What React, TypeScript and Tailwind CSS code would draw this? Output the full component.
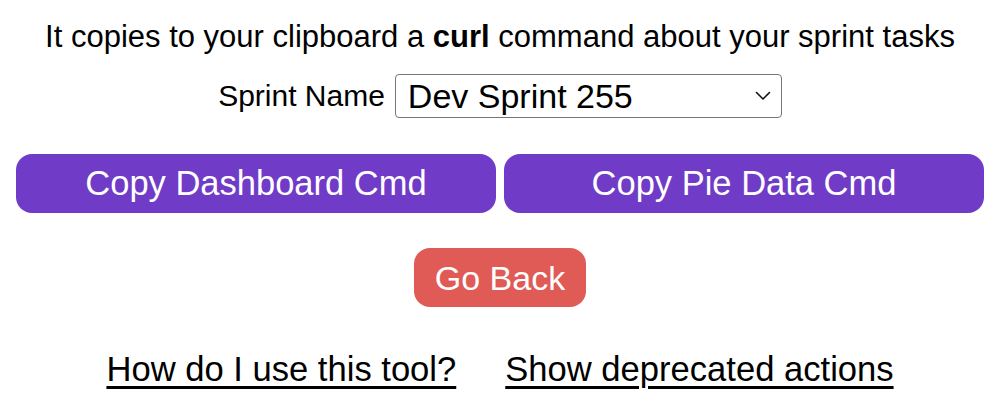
import { useState } from 'react'

const font = { fontFamily: '"Liberation Sans", Arial, Helvetica, sans-serif' }

export default function App() {
  const [sprint, setSprint] = useState('Dev Sprint 255')

  return (
    <div className="flex flex-col items-center bg-white text-black pt-[19px] w-[1000px] h-[416px]" style={font}>
      <p className="text-[31px] leading-[36px]">
        It copies to your clipboard a <b>curl</b> command about your sprint tasks
      </p>

      <div className="flex items-center gap-[10px] mt-[19px]">
        <label htmlFor="sprint" className="text-[30px] leading-[36px]">Sprint Name</label>
        <div className="relative">
          <select
            id="sprint"
            value={sprint}
            onChange={e => setSprint(e.target.value)}
            className="appearance-none w-[387px] h-[44px] border border-[#767676] rounded-[4px] bg-white pl-[12px] pr-10 text-[34px] leading-[40px] text-black outline-none"
          >
            <option>Dev Sprint 255</option>
            <option>Dev Sprint 254</option>
            <option>Dev Sprint 253</option>
          </select>
          <svg
            className="pointer-events-none absolute right-[11px] top-1/2 -translate-y-1/2"
            width="16"
            height="10"
            viewBox="0 0 16 10"
            fill="none"
            stroke="#111"
            strokeWidth="1.6"
            strokeLinecap="round"
            strokeLinejoin="round"
          >
            <path d="M1.5 1.5 L8 8 L14.5 1.5" />
          </svg>
        </div>
      </div>

      <div className="flex gap-2 px-4 w-full mt-[36px]">
        <button className="flex-1 h-[59px] rounded-[16px] bg-[#6f3bc7] text-white text-[34.5px] leading-none">
          Copy Dashboard Cmd
        </button>
        <button className="flex-1 h-[59px] rounded-[16px] bg-[#6f3bc7] text-white text-[34.5px] leading-none">
          Copy Pie Data Cmd
        </button>
      </div>

      <button className="mt-[35px] h-[59px] px-[21px] rounded-[16px] bg-[#e05a56] text-white text-[34px] leading-none">
        Go Back
      </button>

      <div className="flex gap-[49px] mt-[43px] text-[34.6px] leading-[38px]">
        <a href="#" className="underline decoration-[3px] underline-offset-[5px]">How do I use this tool?</a>
        <a href="#" className="underline decoration-[3px] underline-offset-[5px]">Show deprecated actions</a>
      </div>
    </div>
  )
}
